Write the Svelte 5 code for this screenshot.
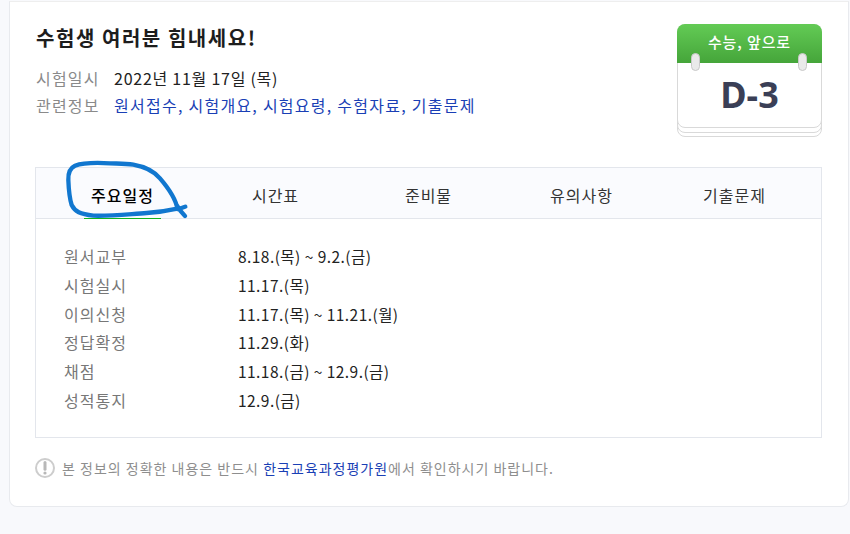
<script>
  const tabs = ["주요일정", "시간표", "준비물", "유의사항", "기출문제"];
  const links = ["원서접수", "시험개요", "시험요령", "수험자료", "기출문제"];
  const schedule = [
    ["원서교부", "8.18.(목) ~ 9.2.(금)"],
    ["시험실시", "11.17.(목)"],
    ["이의신청", "11.17.(목) ~ 11.21.(월)"],
    ["정답확정", "11.29.(화)"],
    ["채점", "11.18.(금) ~ 12.9.(금)"],
    ["성적통지", "12.9.(금)"]
  ];
</script>

<div class="page">
  <section class="card">
    <header class="top">
      <div class="intro">
        <h1>수험생 여러분 힘내세요!</h1>
        <div class="info"><span class="label">시험일시</span><span class="when">2022년 11월 17일 (목)</span></div>
        <div class="info">
          <span class="label">관련정보</span>
          <span class="links">
            {#each links as link, i}<a href="#top">{link}</a>{i < links.length - 1 ? ", " : ""}{/each}
          </span>
        </div>
      </div>
      <div class="calendar">
        <div class="sheet back2"></div>
        <div class="sheet back1"></div>
        <div class="sheet front">
          <div class="green">수능, 앞으로</div>
          <div class="count">D-3</div>
          <i class="ring left"></i>
          <i class="ring right"></i>
        </div>
      </div>
    </header>

    <div class="box">
      <nav class="tabs">
        {#each tabs as tab, i}
          <div class="tab" class:active={i === 0}>{tab}</div>
        {/each}
      </nav>
      <div class="rows">
        {#each schedule as [name, date]}
          <div class="row"><span class="name">{name}</span><span class="date">{date}</span></div>
        {/each}
      </div>
    </div>

    <p class="notice">
      <svg width="20" height="20" viewBox="0 0 20 20">
        <circle cx="10" cy="10" r="9" fill="#fff" stroke="#cdcdcd" stroke-width="2" />
        <path d="M10 4.6v6.6" stroke="#b8b8b8" stroke-width="3" stroke-linecap="round" />
        <circle cx="10" cy="15" r="1.6" fill="#b8b8b8" />
      </svg>
      <span>본 정보의 정확한 내용은 반드시 <a href="#top">한국교육과정평가원</a>에서 확인하시기 바랍니다.</span>
    </p>
  </section>

  <svg class="scribble" width="200" height="90" viewBox="0 0 600 270" fill="none">
    <path d="M240 40 C205 38 165 36 135 47 C118 55 114 70 115 90 C116 115 117 140 125 165 C135 185 150 192 190 197 C240 199 300 192 350 189 C385 187 415 182 442 176 C438 150 420 120 390 85 C370 62 345 50 310 44 C285 40 262 41 240 40 M440 165 C447 178 455 188 465 198 M442 177 C450 176 458 174 466 170"
      stroke="#1177cf" stroke-width="13" stroke-linecap="round" stroke-linejoin="round" />
  </svg>
</div>

<style>
  :global(body) {
    margin: 0;
    background: #f8f9fc;
  }
  .page {
    position: relative;
    width: 850px;
    height: 534px;
    overflow: hidden;
    padding: 1px 0 0 9px;
    box-sizing: border-box;
    font-family: "Noto Sans CJK KR", "Noto Sans", sans-serif;
    font-size: 16px;
    letter-spacing: 1px;
    color: #222;
  }
  .card {
    width: 840px;
    height: 506px;
    box-sizing: border-box;
    padding: 22px 26px 0 25px;
    background: #fff;
    border: 1px solid #e8eaee;
    border-top-color: #eee;
    border-radius: 0 0 8px 8px;
  }
  .top {
    display: flex;
    justify-content: space-between;
    height: 143px;
  }
  .intro {
    padding-left: 1px;
  }
  h1 {
    margin: 0 0 13px;
    font-size: 20px;
    line-height: 28px;
    font-weight: 700;
    letter-spacing: 1.55px;
    color: #1d1d1d;
  }
  .info {
    display: flex;
    line-height: 27px;
  }
  .label {
    width: 78px;
    color: #8a8a8a;
    letter-spacing: 1.2px;
  }
  .when {
    letter-spacing: 0.75px;
  }
  a {
    color: #1a3fb5;
    text-decoration: none;
  }
  .links {
    color: #1a3fb5;
    letter-spacing: 1.25px;
  }
  .calendar {
    position: relative;
    width: 145px;
    height: 113px;
  }
  .sheet {
    position: absolute;
    left: 0;
    width: 145px;
    box-sizing: border-box;
    background: #fff;
    border: 1px solid #d9d9d9;
    border-radius: 8px;
  }
  .back2 {
    top: 10px;
    height: 103px;
  }
  .back1 {
    top: 5px;
    height: 104px;
  }
  .front {
    top: 0;
    height: 104px;
  }
  .green {
    height: 39px;
    margin: -1px -1px 0;
    background: linear-gradient(#63cb55, #45a53a);
    border-radius: 8px 8px 0 0;
    color: #fff;
    font-size: 15px;
    font-weight: 500;
    letter-spacing: 0.9px;
    line-height: 36px;
    text-align: center;
  }
  .count {
    text-align: center;
    font-size: 36px;
    font-weight: 700;
    line-height: 40px;
    margin-top: 12px;
    letter-spacing: 0;
    color: #3a3f56;
    font-family: "Noto Sans", sans-serif;
  }
  .ring {
    position: absolute;
    top: 28px;
    width: 9px;
    height: 18px;
    box-sizing: border-box;
    background: #eaeaea;
    border: 1px solid #c8c8c8;
    border-radius: 5px;
  }
  .ring.left {
    left: 13px;
  }
  .ring.right {
    right: 14px;
  }
  .box {
    height: 271px;
    box-sizing: border-box;
    border: 1px solid #e3e6ec;
  }
  .tabs {
    display: flex;
    height: 51px;
    box-sizing: border-box;
    padding: 0 10px;
    background: #fafbfe;
    border-bottom: 1px solid #e3e6ec;
  }
  .tab {
    flex: 1;
    text-align: center;
    line-height: 54px;
    height: 50px;
    color: #333;
  }
  .tab.active {
    color: #000;
    font-weight: 500;
    position: relative;
  }
  .tab.active::after {
    content: "";
    position: absolute;
    left: 38px;
    width: 77px;
    bottom: -1px;
    height: 1px;
    background: #10b41f;
  }
  .rows {
    padding: 23px 28px 0;
  }
  .row {
    display: flex;
    line-height: 28.8px;
    height: 28.8px;
  }
  .name {
    width: 174px;
    color: #777;
  }
  .date {
    font-size: 15.5px;
    letter-spacing: 0.45px;
  }
  .notice {
    display: flex;
    align-items: center;
    gap: 7px;
    margin: 20px 0 0;
    font-size: 14px;
    letter-spacing: 1px;
    color: #8e8e8e;
    line-height: 20px;
  }
  .notice svg {
    flex: none;
  }
  .scribble {
    position: absolute;
    left: 30px;
    top: 150px;
  }
</style>
